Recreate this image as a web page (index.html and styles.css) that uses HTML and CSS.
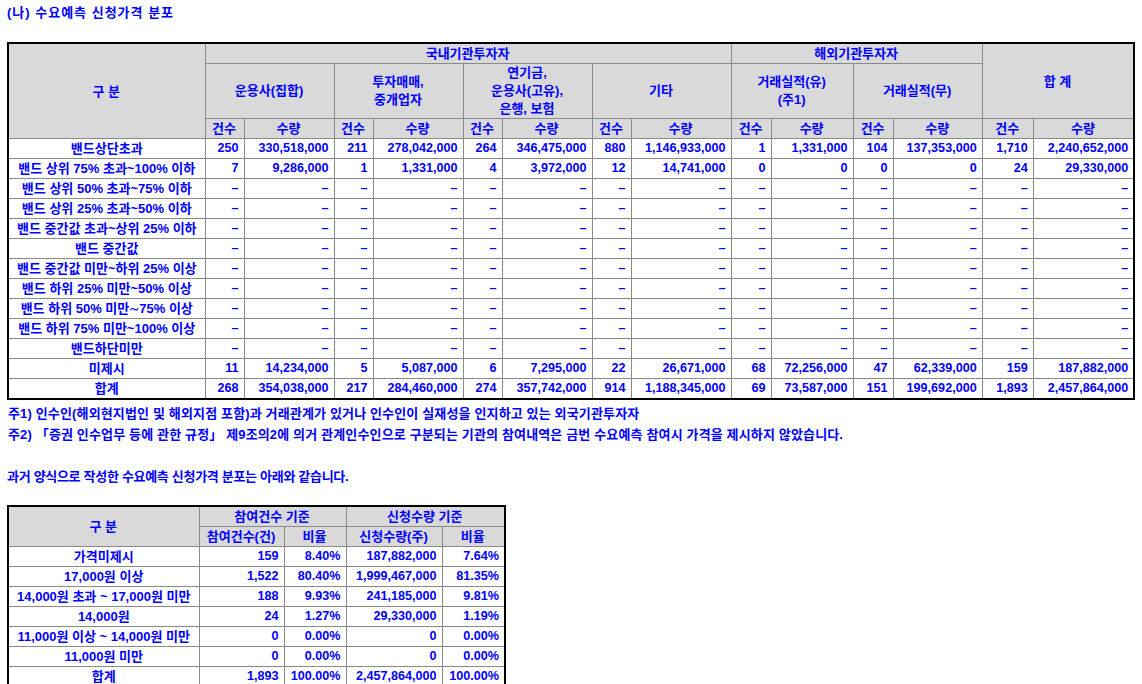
FILE: index.html
```html
<!DOCTYPE html>
<html lang="ko">
<head>
<meta charset="utf-8">
<title>수요예측 신청가격 분포</title>
<link rel="stylesheet" href="styles.css">
</head>
<body>
<p class="title">(나) 수요예측 신청가격 분포</p>
<table class="grid main">
<colgroup>
<col class="c197"><col class="c39"><col class="c90"><col class="c39"><col class="c90"><col class="c39"><col class="c90"><col class="c39"><col class="c100"><col class="c40"><col class="c82"><col class="c40"><col class="c89"><col class="c51"><col class="c101">
</colgroup>
<thead>
<tr class="h1"><th rowspan="3">구 분</th><th colspan="8">국내기관투자자</th><th colspan="4">해외기관투자자</th><th rowspan="2" colspan="2">합 계</th></tr>
<tr class="h2"><th colspan="2">운용사(집합)</th><th colspan="2">투자매매,<br>중개업자</th><th colspan="2">연기금,<br>운용사(고유),<br>은행, 보험</th><th colspan="2">기타</th><th colspan="2">거래실적(유)<br>(주1)</th><th colspan="2">거래실적(무)</th></tr>
<tr class="h3"><th>건수</th><th>수량</th><th>건수</th><th>수량</th><th>건수</th><th>수량</th><th>건수</th><th>수량</th><th>건수</th><th>수량</th><th>건수</th><th>수량</th><th>건수</th><th>수량</th></tr>
</thead>
<tbody>
<tr><td class="lb">밴드상단초과</td><td>250</td><td>330,518,000</td><td>211</td><td>278,042,000</td><td>264</td><td>346,475,000</td><td>880</td><td>1,146,933,000</td><td>1</td><td>1,331,000</td><td>104</td><td>137,353,000</td><td>1,710</td><td>2,240,652,000</td></tr>
<tr><td class="lb">밴드 상위 75% 초과~100% 이하</td><td>7</td><td>9,286,000</td><td>1</td><td>1,331,000</td><td>4</td><td>3,972,000</td><td>12</td><td>14,741,000</td><td>0</td><td>0</td><td>0</td><td>0</td><td>24</td><td>29,330,000</td></tr>
<tr><td class="lb">밴드 상위 50% 초과~75% 이하</td><td>–</td><td>–</td><td>–</td><td>–</td><td>–</td><td>–</td><td>–</td><td>–</td><td>–</td><td>–</td><td>–</td><td>–</td><td>–</td><td>–</td></tr>
<tr><td class="lb">밴드 상위 25% 초과~50% 이하</td><td>–</td><td>–</td><td>–</td><td>–</td><td>–</td><td>–</td><td>–</td><td>–</td><td>–</td><td>–</td><td>–</td><td>–</td><td>–</td><td>–</td></tr>
<tr><td class="lb">밴드 중간값 초과~상위 25% 이하</td><td>–</td><td>–</td><td>–</td><td>–</td><td>–</td><td>–</td><td>–</td><td>–</td><td>–</td><td>–</td><td>–</td><td>–</td><td>–</td><td>–</td></tr>
<tr><td class="lb">밴드 중간값</td><td>–</td><td>–</td><td>–</td><td>–</td><td>–</td><td>–</td><td>–</td><td>–</td><td>–</td><td>–</td><td>–</td><td>–</td><td>–</td><td>–</td></tr>
<tr><td class="lb">밴드 중간값 미만~하위 25% 이상</td><td>–</td><td>–</td><td>–</td><td>–</td><td>–</td><td>–</td><td>–</td><td>–</td><td>–</td><td>–</td><td>–</td><td>–</td><td>–</td><td>–</td></tr>
<tr><td class="lb">밴드 하위 25% 미만~50% 이상</td><td>–</td><td>–</td><td>–</td><td>–</td><td>–</td><td>–</td><td>–</td><td>–</td><td>–</td><td>–</td><td>–</td><td>–</td><td>–</td><td>–</td></tr>
<tr><td class="lb">밴드 하위 50% 미만∼75% 이상</td><td>–</td><td>–</td><td>–</td><td>–</td><td>–</td><td>–</td><td>–</td><td>–</td><td>–</td><td>–</td><td>–</td><td>–</td><td>–</td><td>–</td></tr>
<tr><td class="lb">밴드 하위 75% 미만~100% 이상</td><td>–</td><td>–</td><td>–</td><td>–</td><td>–</td><td>–</td><td>–</td><td>–</td><td>–</td><td>–</td><td>–</td><td>–</td><td>–</td><td>–</td></tr>
<tr><td class="lb">밴드하단미만</td><td>–</td><td>–</td><td>–</td><td>–</td><td>–</td><td>–</td><td>–</td><td>–</td><td>–</td><td>–</td><td>–</td><td>–</td><td>–</td><td>–</td></tr>
<tr><td class="lb">미제시</td><td>11</td><td>14,234,000</td><td>5</td><td>5,087,000</td><td>6</td><td>7,295,000</td><td>22</td><td>26,671,000</td><td>68</td><td>72,256,000</td><td>47</td><td>62,339,000</td><td>159</td><td>187,882,000</td></tr>
<tr><td class="lb">합계</td><td>268</td><td>354,038,000</td><td>217</td><td>284,460,000</td><td>274</td><td>357,742,000</td><td>914</td><td>1,188,345,000</td><td>69</td><td>73,587,000</td><td>151</td><td>199,692,000</td><td>1,893</td><td>2,457,864,000</td></tr>
</tbody>
</table>
<p class="note first">주1) 인수인(해외현지법인 및 해외지점 포함)과 거래관계가 있거나 인수인이 실재성을 인지하고 있는 외국기관투자자</p>
<p class="note">주2) 「증권 인수업무 등에 관한 규정」 제9조의2에 의거 관계인수인으로 구분되는 기관의 참여내역은 금번 수요예측 참여시 가격을 제시하지 않았습니다.</p>
<p class="intro">과거 양식으로 작성한 수요예측 신청가격 분포는 아래와 같습니다.</p>
<table class="grid small">
<colgroup><col class="c191"><col class="c85"><col class="c62"><col class="c96"><col class="c63"></colgroup>
<thead>
<tr><th rowspan="2">구 분</th><th colspan="2">참여건수 기준</th><th colspan="2">신청수량 기준</th></tr>
<tr><th>참여건수(건)</th><th>비율</th><th>신청수량(주)</th><th>비율</th></tr>
</thead>
<tbody>
<tr><td class="lb">가격미제시</td><td>159</td><td>8.40%</td><td>187,882,000</td><td>7.64%</td></tr>
<tr><td class="lb">17,000원 이상</td><td>1,522</td><td>80.40%</td><td>1,999,467,000</td><td>81.35%</td></tr>
<tr><td class="lb">14,000원 초과 ~ 17,000원 미만</td><td>188</td><td>9.93%</td><td>241,185,000</td><td>9.81%</td></tr>
<tr><td class="lb">14,000원</td><td>24</td><td>1.27%</td><td>29,330,000</td><td>1.19%</td></tr>
<tr><td class="lb">11,000원 이상 ~ 14,000원 미만</td><td>0</td><td>0.00%</td><td>0</td><td>0.00%</td></tr>
<tr><td class="lb">11,000원 미만</td><td>0</td><td>0.00%</td><td>0</td><td>0.00%</td></tr>
<tr><td class="lb">합계</td><td>1,893</td><td>100.00%</td><td>2,457,864,000</td><td>100.00%</td></tr>
</tbody>
</table>
</body>
</html>
```

FILE: styles.css
```css
html, body {
  margin: 0;
  background: #fff;
}
body {
  padding: 2px 6px 0 7px;
  font-family: "Liberation Sans", "Noto Sans CJK KR", sans-serif;
  font-weight: bold;
  font-size: 13px;
  color: #0000ff;
}
.title {
  margin: 0 0 19px;
  line-height: 21px;
  letter-spacing: 1px;
}
.grid {
  border-collapse: collapse;
  table-layout: fixed;
  border: 2px solid #000;
}
.main { width: 1126px; }
.small { width: 497px; }
.grid th, .grid td {
  border: 1px solid #8a8a8a;
  padding: 0 5px 0 4px;
  height: 19px;
  line-height: 19px;
  white-space: nowrap;
  overflow: hidden;
  font-weight: bold;
}
.grid th {
  background: #d9d9d9;
  text-align: center;
}
.grid td {
  text-align: right;
  font-size: 12.6px;
}
.grid td.lb {
  text-align: center;
  padding: 0 1px;
  font-size: 13px;
}
.main .h1 th { height: 19px; }
.main .h2 th { height: 54px; line-height: 18px; }
.c197 { width: 197px; }
.c39 { width: 39px; }
.c40 { width: 40px; }
.c51 { width: 51px; }
.c82 { width: 82px; }
.c89 { width: 89px; }
.c90 { width: 90px; }
.c100 { width: 100px; }
.c101 { width: 101px; }
.c191 { width: 191px; }
.c85 { width: 85px; }
.c62 { width: 62px; }
.c96 { width: 96px; }
.c63 { width: 63px; }
.note {
  margin: 0;
  line-height: 21px;
  padding-left: 1px;
  letter-spacing: 0.15px;
}
.note.first { margin-top: 3px; }
.intro {
  margin: 21px 0 18px;
  line-height: 21px;
  letter-spacing: -0.3px;
}
```
